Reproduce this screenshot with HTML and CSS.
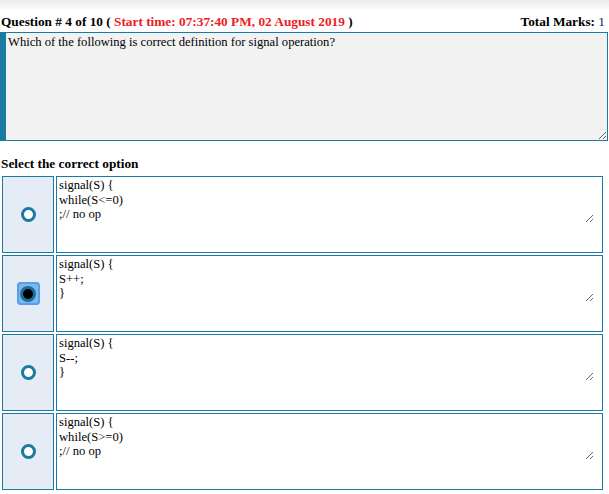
FILE: index.html
```html
<!DOCTYPE html>
<html>
<head>
<meta charset="utf-8">
<link rel="stylesheet" href="styles.css">
</head>
<body>
<div class="topbar"></div>
<div class="header">
  <span class="qtitle">Question # 4 of 10 ( <span class="red">Start time: 07:37:40 PM, 02 August 2019</span> )</span>
  <span class="marks">Total Marks: <span class="num">1</span></span>
</div>
<textarea class="question">Which of the following is correct definition for signal operation?</textarea>
<div class="select">Select the correct option</div>
<div class="options">
  <div class="radio-cell"><span class="radio"></span></div>
  <div class="text-cell"><textarea class="answer">signal(S) {
while(S&lt;=0)
;// no op</textarea></div>

  <div class="radio-cell"><span class="focus"><span class="radio checked"></span></span></div>
  <div class="text-cell"><textarea class="answer">signal(S) {
S++;
}</textarea></div>

  <div class="radio-cell"><span class="radio"></span></div>
  <div class="text-cell"><textarea class="answer">signal(S) {
S--;
}</textarea></div>

  <div class="radio-cell"><span class="radio"></span></div>
  <div class="text-cell"><textarea class="answer">signal(S) {
while(S&gt;=0)
;// no op</textarea></div>
</div>
</body>
</html>
```
FILE: styles.css
```css
html, body {
  margin: 0;
  padding: 0;
  background: #fff;
  font-family: "Liberation Serif", "Times New Roman", serif;
  color: #000;
}
.topbar {
  height: 9px;
  background: linear-gradient(#ebebeb, #fafafa);
}
.header {
  display: flex;
  justify-content: space-between;
  align-items: baseline;
  padding: 4px 4px 0 1px;
  font-size: 13.3px;
  font-weight: bold;
  line-height: 17px;
  height: 19px;
}
.red { color: #ee1c24; }
.num { font-weight: normal; color: #0b1a4d; }
.question {
  display: block;
  box-sizing: border-box;
  width: 608px;
  height: 109px;
  margin: 0;
  padding: 2px 2px;
  border: 1px solid #1b7aa1;
  border-left: 6px solid #1b7aa1;
  background: #f2f2f2;
  font-family: "Liberation Serif", "Times New Roman", serif;
  font-size: 12.6px;
  line-height: 15px;
  color: #000;
  outline: none;
}
.select {
  font-size: 13.3px;
  font-weight: bold;
  line-height: 16px;
  padding: 15px 0 0 1px;
  height: 20px;
}
.options {
  display: grid;
  grid-template-columns: 52px 547px;
  grid-auto-rows: 77px;
  column-gap: 2px;
  row-gap: 2px;
  padding-left: 2px;
}
.radio-cell {
  box-sizing: border-box;
  border: 1px solid #1b7aa1;
  background: #e6ecf5;
  display: flex;
  align-items: center;
  justify-content: center;
}
.text-cell {
  box-sizing: border-box;
  border: 1px solid #1b7aa1;
  background: #fff;
}
.answer {
  display: block;
  box-sizing: border-box;
  width: 537px;
  height: 46px;
  margin: 0;
  padding: 1px 2px;
  border: none;
  background: #fff;
  font-family: "Liberation Serif", "Times New Roman", serif;
  font-size: 12.6px;
  line-height: 14.5px;
  color: #000;
  outline: none;
  overflow: hidden;
}
.radio {
  display: block;
  box-sizing: border-box;
  width: 15px;
  height: 15px;
  border-radius: 50%;
  border: 3px solid #1b7aa1;
  background: #fff;
}
.radio.checked {
  width: 16px;
  height: 16px;
  border: 3px solid #1b6f95;
  background: #000;
}
.focus {
  display: flex;
  align-items: center;
  justify-content: center;
  width: 23px;
  height: 23px;
  box-sizing: border-box;
  border-radius: 4px;
  background: #7db7f2;
  box-shadow: inset 0 0 0 2px #5a9ee8;
}
```
